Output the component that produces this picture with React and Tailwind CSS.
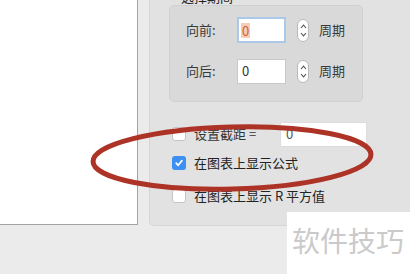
import React from 'react';

const Stepper = () => (
    <div className="w-[12px] h-[23px] rounded-full bg-white border border-[#b9b9b9] flex flex-col items-center justify-center gap-[3px]">
        <svg width="7" height="5" viewBox="0 0 7 5"><path d="M1 4 L3.5 1.2 L6 4" fill="none" stroke="#555" strokeWidth="1.1" /></svg>
        <svg width="7" height="5" viewBox="0 0 7 5"><path d="M1 1 L3.5 3.8 L6 1" fill="none" stroke="#555" strokeWidth="1.1" /></svg>
    </div>
);

const Checkbox = ({ checked }) => (
    checked ? (
        <div className="w-[14px] h-[14px] rounded-[3px] bg-[#3d8ff2] flex items-center justify-center">
            <svg width="10" height="10" viewBox="0 0 10 10"><path d="M2.2 5.2 L4.2 7.3 L7.9 2.6" fill="none" stroke="#fff" strokeWidth="1.7" strokeLinecap="round" strokeLinejoin="round" /></svg>
        </div>
    ) : (
        <div className="w-[14px] h-[14px] rounded-[3px] bg-white border border-[#c4c4c4]" />
    )
);

const App = () => {
    return (
        <div className="relative w-[410px] h-[274px] overflow-hidden bg-[#ebebeb] font-['Noto_Sans_CJK_SC',sans-serif] text-[13px] text-[#222]">
            <div className="flex">
                <div className="w-[138px] h-[225px] bg-white border-r border-b border-[#a3a3a3]" />
                <div className="ml-[11px] flex-1 h-[226px] bg-[#e2e2e2] rounded-bl-[5px] border-l border-b border-[#d6d6d6]">
                    <div className="ml-[19px] mt-[-12px] w-[194px]">
                        <div className="pl-[12px] h-[17px] leading-[17px] text-[#222]">选择期间</div>
                        <div className="h-[97px] rounded-[5px] bg-[#d9d9d9] border border-[#d0d0d0] pt-[11px] pl-[16px] flex flex-col gap-[15px]">
                            <div className="flex items-center h-[26px]">
                                <span className="w-[51px] text-[#3a3a3a]">向前:</span>
                                <div className="w-[49px] h-[26px] bg-white border-2 border-[#a9c8ea] flex items-center pl-[2px]">
                                    <span className="bg-[#f5cdb8] text-[#d0602e] leading-[15px] px-[1px]">0</span>
                                </div>
                                <div className="ml-[11px]"><Stepper /></div>
                                <span className="ml-[10px] text-[#3a3a3a]">周期</span>
                            </div>
                            <div className="flex items-center h-[26px]">
                                <span className="w-[51px] text-[#3a3a3a]">向后:</span>
                                <div className="w-[49px] h-[25px] bg-white border border-[#c8c8c8] flex items-center pl-[4px] text-[#333]">0</div>
                                <div className="ml-[11px]"><Stepper /></div>
                                <span className="ml-[10px] text-[#3a3a3a]">周期</span>
                            </div>
                        </div>
                    </div>
                    <div className="mt-[19px] pl-[22px] flex flex-col">
                        <div className="flex items-center h-[26px]">
                            <Checkbox />
                            <span className="ml-[8px] w-[86px] text-[#333]">设置截距 =</span>
                            <div className="w-[87px] h-[25px] bg-white border border-[#dcdcdc] flex items-center pl-[5px] text-[#555]">0</div>
                        </div>
                        <div className="flex items-center h-[20px] mt-[6px]">
                            <Checkbox checked />
                            <span className="ml-[8px] text-[#222]">在图表上显示公式</span>
                        </div>
                        <div className="flex items-center h-[20px] mt-[13px]">
                            <Checkbox />
                            <span className="ml-[8px] text-[#222]">在图表上显示 R 平方值</span>
                        </div>
                    </div>
                </div>
            </div>

            <div className="absolute left-[287px] top-[212px] w-[123px] h-[62px] bg-white pl-[5px] pt-[10px]">
                <span className="text-[28px] leading-[36px] text-[#cacaca]">软件技巧</span>
            </div>

            <svg className="absolute left-0 top-0 pointer-events-none" width="410" height="274" viewBox="0 0 410 274">
                <ellipse cx="232" cy="158" rx="139" ry="31" transform="rotate(-1.5 232 158)" fill="none" stroke="#ad3327" strokeWidth="5" />
            </svg>
        </div>
    );
};

export default App;
